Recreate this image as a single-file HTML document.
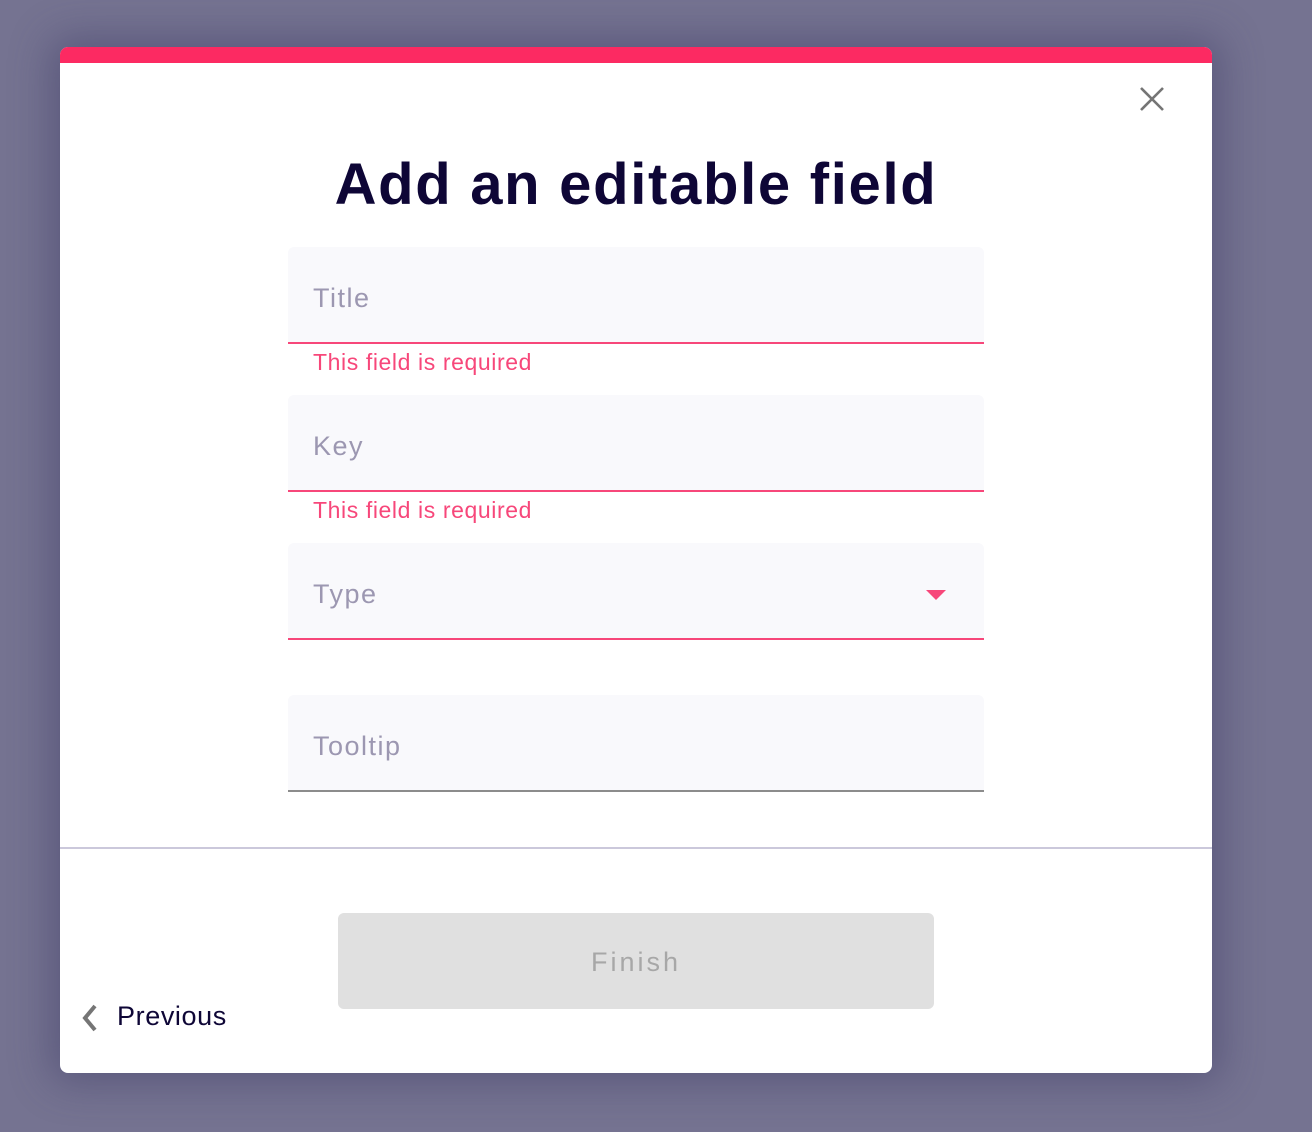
<!DOCTYPE html>
<html><head><meta charset="utf-8"><style>
*{margin:0;padding:0;box-sizing:border-box}
html,body{width:1312px;height:1132px;overflow:hidden}
body{background:#757391;font-family:"Liberation Sans",sans-serif;position:relative}
.modal{position:absolute;left:60px;top:47px;width:1152px;height:1026px;background:#fff;border-radius:8px;box-shadow:0 0 40px 10px rgba(60,58,100,.45);overflow:hidden}
.bar{position:absolute;left:0;top:0;width:100%;height:16px;background:#fc2a62}
.close{position:absolute;left:1078px;top:38px}
h1{position:absolute;left:0;width:100%;top:104px;text-align:center;font-size:58px;font-weight:bold;color:#0e0636;letter-spacing:1.7px}
.f{position:absolute;left:228px;width:696px;height:97px;background:#f9f9fc;border-radius:6px 6px 0 0;border-bottom:2px solid #f7477a}
.f span{position:absolute;left:25px;top:36px;font-size:27px;color:#9c97b1;letter-spacing:1.5px}
.err{position:absolute;left:253px;font-size:23px;color:#f7477a;letter-spacing:0.6px}
.tri{position:absolute;right:38px;top:47px;width:0;height:0;border-left:10px solid transparent;border-right:10px solid transparent;border-top:10px solid #f7477a}
.hr{position:absolute;left:0;top:800px;width:100%;height:2px;background:#cbc8db}
.btn{position:absolute;left:278px;top:866px;width:596px;height:96px;background:#e0e0e0;border-radius:6px;text-align:center;line-height:98px;font-size:27px;color:#a7a7a7;letter-spacing:3px}
.prev{position:absolute;left:57px;top:954px;font-size:27px;color:#0e0636;letter-spacing:0.6px}
.chev{position:absolute;left:20px;top:957px}
</style></head><body>
<div class="modal">
<div class="bar"></div>
<svg class="close" width="28" height="28" viewBox="0 0 28 28"><path d="M3 3L25 25M25 3L3 25" stroke="#757575" stroke-width="2.6" fill="none"/></svg>
<h1>Add an editable field</h1>
<div class="f" style="top:200px"><span>Title</span></div>
<div class="err" style="top:302px">This field is required</div>
<div class="f" style="top:348px"><span>Key</span></div>
<div class="err" style="top:450px">This field is required</div>
<div class="f" style="top:496px"><span>Type</span><div class="tri"></div></div>
<div class="f" style="top:648px;border-bottom-color:#8c8c8c"><span>Tooltip</span></div>
<div class="hr"></div>
<div class="btn">Finish</div>
<svg class="chev" width="20" height="28" viewBox="0 0 20 28"><path d="M15 2L5 14L15 26" stroke="#757575" stroke-width="4" fill="none"/></svg>
<div class="prev">Previous</div>
</div>
</body></html>
